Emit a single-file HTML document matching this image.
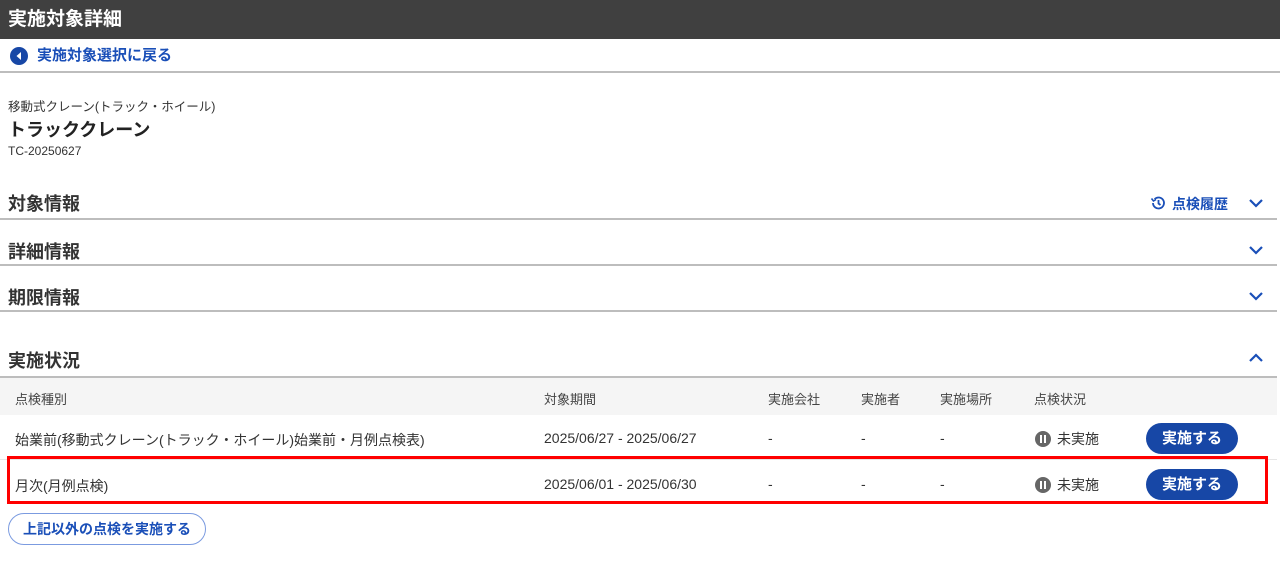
<!DOCTYPE html>
<html><head><meta charset="utf-8"><style>
*{margin:0;padding:0;box-sizing:border-box}
body{width:1280px;height:564px;background:#fff;font-family:"Liberation Sans","Noto Sans CJK JP",sans-serif;color:#222;position:relative;overflow:hidden}
.a{position:absolute;white-space:nowrap}
.hdr{left:0;top:0;width:1280px;height:39px;background:#404040;color:#fff;font-size:19px;font-weight:bold;line-height:39px;padding-left:8px}
.blue{color:#1a4fb8}
.sec{font-size:18px;font-weight:bold;color:#333}
.line{position:absolute;left:0;width:1277px;height:2px;background:#bdbdbd}
.th{font-size:13px;color:#444}
.td{font-size:14px;color:#333}
.btn{position:absolute;width:92px;height:31px;border-radius:16px;background:#1747a6;color:#fff;font-size:15px;font-weight:bold;text-align:center;line-height:31px}
.st{font-size:14px;color:#333}
.dot{display:inline-block;width:16px;height:16px;border-radius:50%;background:#666;vertical-align:-3px;margin-right:6px;position:relative}
.dot:before,.dot:after{content:"";position:absolute;top:4px;width:2px;height:8px;background:#fff}
.dot:before{left:5px}.dot:after{left:9px}
</style></head><body>
<div class="a hdr">実施対象詳細</div>
<svg class="a" style="left:10px;top:47px" width="18" height="18" viewBox="0 0 18 18"><circle cx="9" cy="9" r="9" fill="#1747a6"/><path d="M11 5L6.5 9L11 13Z" fill="#fff"/></svg>
<div class="a blue" style="left:37px;top:46px;font-size:15px;font-weight:bold;line-height:20px">実施対象選択に戻る</div>
<div class="line" style="top:71px;width:1280px"></div>
<div class="a" style="left:8px;top:96px;font-size:12.5px;color:#333">移動式クレーン(トラック・ホイール)</div>
<div class="a" style="left:8px;top:116px;font-size:18px;font-weight:bold;color:#222">トラッククレーン</div>
<div class="a" style="left:8px;top:144px;font-size:12px;color:#333">TC-20250627</div>

<div class="a sec" style="left:8px;top:190px">対象情報</div>
<svg class="a" style="left:1150px;top:195px" width="16" height="16" viewBox="0 0 16 16" fill="none" stroke="#1a4fb8" stroke-width="1.8"><path d="M3 8a5.5 5.5 0 1 0 1.6-3.9"/><path d="M1.5 3.5L3.5 6L6 4.5" stroke-width="1.6"/><path d="M8.5 5v3.5l2 1.5"/></svg>
<div class="a blue" style="left:1172px;top:194px;font-size:14px;font-weight:bold">点検履歴</div>
<svg class="a" style="left:1248px;top:197px" width="16" height="12" viewBox="0 0 16 12"><path d="M2 3l6 6 6-6" fill="none" stroke="#1a4fb8" stroke-width="2.2"/></svg>
<div class="line" style="top:218px"></div>
<div class="a sec" style="left:8px;top:238px">詳細情報</div>
<svg class="a" style="left:1248px;top:244px" width="16" height="12" viewBox="0 0 16 12"><path d="M2 3l6 6 6-6" fill="none" stroke="#1a4fb8" stroke-width="2.2"/></svg>
<div class="line" style="top:264px"></div>
<div class="a sec" style="left:8px;top:284px">期限情報</div>
<svg class="a" style="left:1248px;top:290px" width="16" height="12" viewBox="0 0 16 12"><path d="M2 3l6 6 6-6" fill="none" stroke="#1a4fb8" stroke-width="2.2"/></svg>
<div class="line" style="top:310px"></div>

<div class="a sec" style="left:8px;top:347px">実施状況</div>
<svg class="a" style="left:1248px;top:352px" width="16" height="12" viewBox="0 0 16 12"><path d="M2 9l6-6 6 6" fill="none" stroke="#1a4fb8" stroke-width="2.2"/></svg>
<div class="line" style="top:376px"></div>
<div class="a" style="left:0;top:378px;width:1277px;height:37px;background:#f5f5f5"></div>
<div class="a th" style="left:15px;top:389px">点検種別</div>
<div class="a th" style="left:544px;top:389px">対象期間</div>
<div class="a th" style="left:768px;top:389px">実施会社</div>
<div class="a th" style="left:861px;top:389px">実施者</div>
<div class="a th" style="left:940px;top:389px">実施場所</div>
<div class="a th" style="left:1034px;top:389px">点検状況</div>

<div class="a td" style="left:15px;top:430px">始業前(移動式クレーン(トラック・ホイール)始業前・月例点検表)</div>
<div class="a td" style="left:544px;top:430px">2025/06/27 - 2025/06/27</div>
<div class="a td" style="left:768px;top:430px">-</div>
<div class="a td" style="left:861px;top:430px">-</div>
<div class="a td" style="left:940px;top:430px">-</div>
<div class="a st" style="left:1035px;top:429px"><span class="dot"></span>未実施</div>
<div class="btn" style="left:1146px;top:423px">実施する</div>
<div class="a" style="left:0;top:459px;width:1277px;height:1px;background:#e6e6e6"></div>

<div class="a td" style="left:15px;top:476px">月次(月例点検)</div>
<div class="a td" style="left:544px;top:476px">2025/06/01 - 2025/06/30</div>
<div class="a td" style="left:768px;top:476px">-</div>
<div class="a td" style="left:861px;top:476px">-</div>
<div class="a td" style="left:940px;top:476px">-</div>
<div class="a st" style="left:1035px;top:475px"><span class="dot"></span>未実施</div>
<div class="btn" style="left:1146px;top:469px">実施する</div>
<div class="a" style="left:7px;top:456px;width:1261px;height:48px;border:3px solid #f00"></div>

<div class="a blue" style="left:8px;top:513px;width:198px;height:32px;border:1px solid #7b9be0;border-radius:16px;text-align:center;line-height:30px;font-size:14px;font-weight:bold">上記以外の点検を実施する</div>
</body></html>
